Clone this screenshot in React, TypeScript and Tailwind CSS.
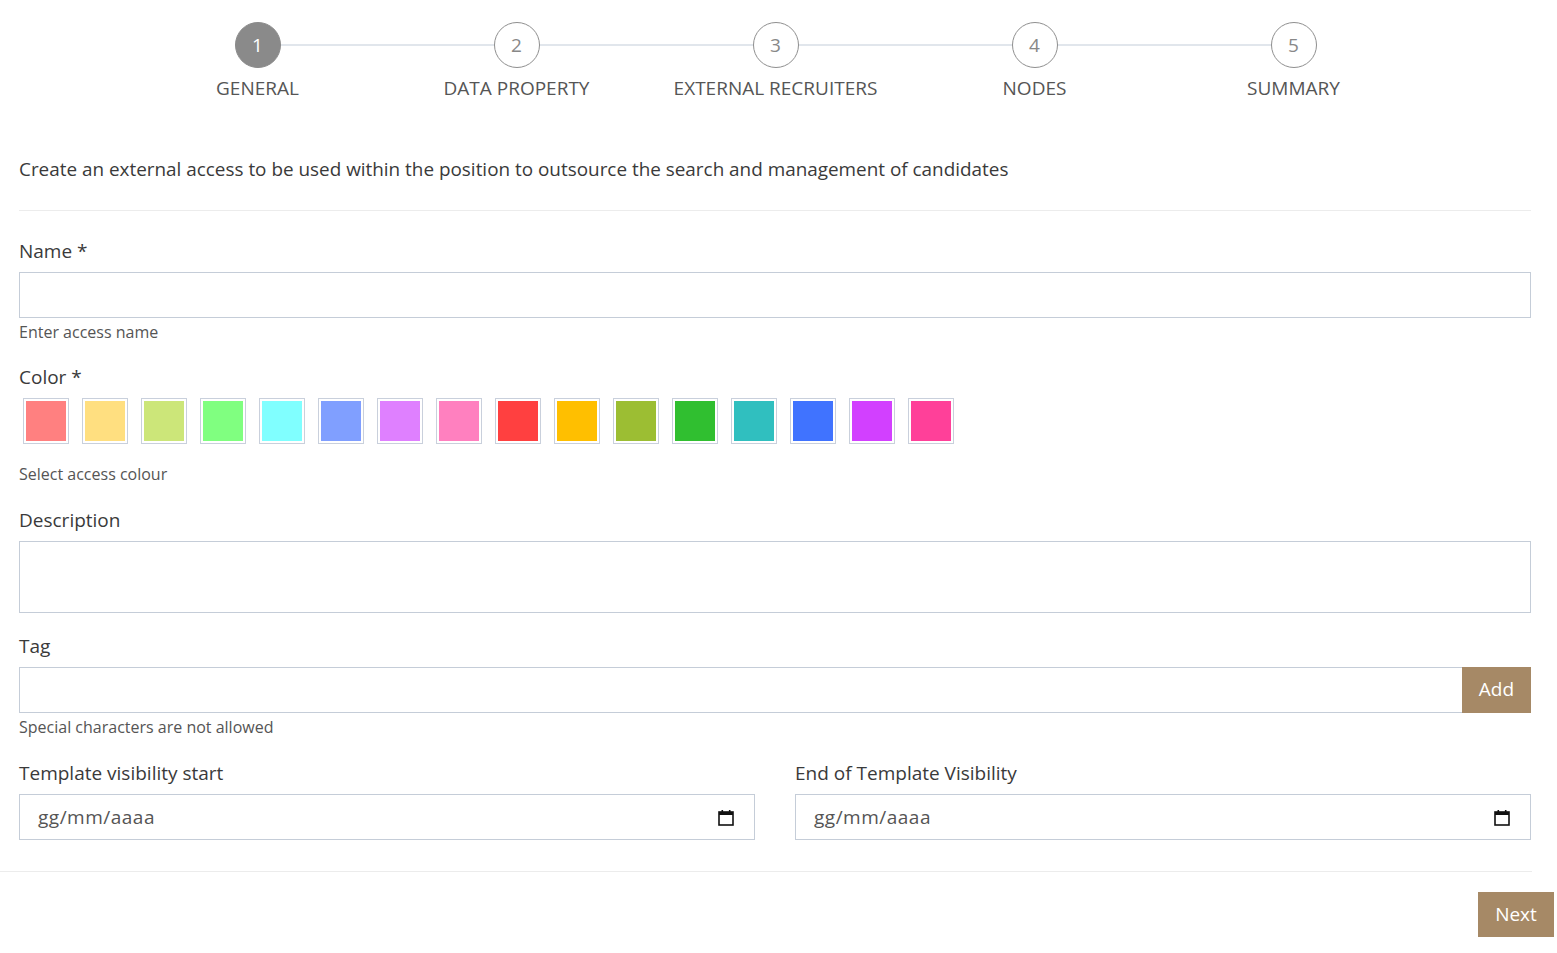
import React from "react";

const steps = [
  { n: 1, label: "GENERAL", active: true },
  { n: 2, label: "DATA PROPERTY" },
  { n: 3, label: "EXTERNAL RECRUITERS" },
  { n: 4, label: "NODES" },
  { n: 5, label: "SUMMARY" },
];

const colors = [
  "#ff8080",
  "#ffdf80",
  "#cce679",
  "#80ff80",
  "#80ffff",
  "#809fff",
  "#df80ff",
  "#ff80bf",
  "#ff4040",
  "#ffbf00",
  "#9cbe33",
  "#30bf30",
  "#30bfbf",
  "#4073ff",
  "#d240ff",
  "#ff4099",
];

function CalendarIcon() {
  return (
    <svg width="16" height="17" viewBox="0 0 16 17" fill="none">
      <rect x="1" y="3" width="14" height="13" stroke="#111" strokeWidth="1.6" fill="none" />
      <rect x="1" y="3" width="14" height="3" fill="#111" />
      <rect x="3.5" y="1" width="1.6" height="3" fill="#111" />
      <rect x="10.9" y="1" width="1.6" height="3" fill="#111" />
    </svg>
  );
}

function DateField({ label }: { label: string }) {
  return (
    <div className="flex-1">
      <div className="text-[19px] leading-[24px] text-[#3a3a3a]">{label}</div>
      <div className="mt-[9px] h-[46px] border border-[#c5cdd8] flex items-center pl-[18px] pr-[20px]">
        <span className="flex-1 text-[19px] tracking-[0.5px] text-[#555]">gg/mm/aaaa</span>
        <CalendarIcon />
      </div>
    </div>
  );
}

export default function App() {
  return (
    <div
      className="w-[1557px] min-h-[953px] bg-white text-[#3a3a3a]"
      style={{ fontFamily: '"Open Sans", "Noto Sans", sans-serif' }}
    >
      {/* Stepper */}
      <div className="pt-[22px] ml-[128px] w-[1295px] grid grid-cols-5">
        {steps.map((s, i) => (
          <div key={s.n} className="relative flex flex-col items-center">
            {i < steps.length - 1 && (
              <div className="absolute top-[22px] left-1/2 w-full h-[2px] bg-[#e1e6ec]" />
            )}
            <div
              className={
                s.active
                  ? "relative z-10 w-[46px] h-[46px] rounded-full bg-[#8a8a8a] border border-[#8a8a8a] flex items-center justify-center text-white text-[19px]"
                  : "relative z-10 w-[46px] h-[46px] rounded-full bg-white border border-[#8f8f8f] flex items-center justify-center text-[#888] text-[19px]"
              }
            >
              {s.n}
            </div>
            <div className="mt-[8px] text-[19px] leading-[24px] text-[#555] whitespace-nowrap">
              {s.label}
            </div>
          </div>
        ))}
      </div>

      <div className="pl-[19px] pr-[26px]">
        <p className="mt-[57px] text-[18.9px] leading-[24px]">
          Create an external access to be used within the position to outsource the search and management of candidates
        </p>
        <div className="mt-[29px] h-px bg-[#ececec]" />

        {/* Name */}
        <div className="mt-[28px] text-[19px] leading-[24px]">Name *</div>
        <div className="mt-[9px] h-[46px] border border-[#c5cdd8]" />
        <div className="mt-[4px] text-[16px] leading-[20px] text-[#555]">Enter access name</div>

        {/* Color */}
        <div className="mt-[23px] text-[19px] leading-[24px]">Color *</div>
        <div className="mt-[9px] ml-[4px] flex gap-[13px]">
          {colors.map((c) => (
            <div key={c} className="w-[46px] h-[46px] border border-[#c9d0dc] p-[2px] bg-white">
              <div className="w-full h-full" style={{ backgroundColor: c }} />
            </div>
          ))}
        </div>
        <div className="mt-[20px] text-[16px] leading-[20px] text-[#555]">Select access colour</div>

        {/* Description */}
        <div className="mt-[24px] text-[19px] leading-[24px]">Description</div>
        <div className="mt-[9px] h-[72px] border border-[#c5cdd8]" />

        {/* Tag */}
        <div className="mt-[21px] text-[19px] leading-[24px]">Tag</div>
        <div className="mt-[9px] flex h-[46px]">
          <div className="flex-1 border border-[#c5cdd8] border-r-0" />
          <button className="w-[69px] h-full bg-[#a68966] text-white text-[19px] leading-[24px] pb-[2px] flex items-center justify-center">
            Add
          </button>
        </div>
        <div className="mt-[4px] text-[16px] leading-[20px] text-[#555]">Special characters are not allowed</div>

        {/* Dates */}
        <div className="mt-[24px] flex gap-[40px]">
          <DateField label="Template visibility start" />
          <DateField label="End of Template Visibility" />
        </div>
      </div>

      <div className="mt-[31px] mr-[25px] h-px bg-[#ececec]" />

      <div className="mt-[20px] flex justify-end pr-[3px]">
        <button className="w-[76px] h-[45px] bg-[#a68966] text-white text-[19px] flex items-center justify-center">
          Next
        </button>
      </div>
    </div>
  );
}
